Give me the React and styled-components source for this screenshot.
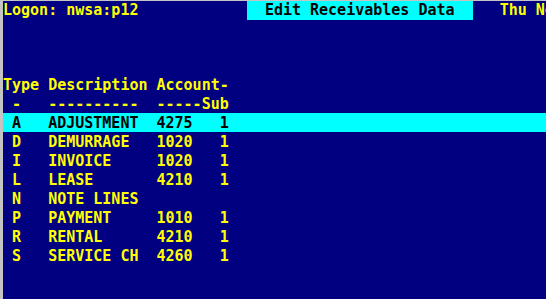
import React from 'react'
import styled, { createGlobalStyle } from 'styled-components';

const Global = createGlobalStyle`
    html, body{
        margin:0;
        padding:0;
        background:#000080;
        overflow:hidden;
    }
`;

// Styles
const Screen = styled.div`
    width:546px;
    height:299px;
    box-sizing:border-box;
    border-top:1px solid #c4c4c4;
    border-left:3px solid #c4c4c4;
    background:#000080;
    overflow:hidden;
    font-family:"DejaVu Sans Mono", "Liberation Mono", monospace;
    font-weight:bold;
    font-size:15px;
    line-height:19px;
    color:#ffff00;
    white-space:pre;
`;

const TopBar = styled.div`
    display:flex;
    height:19px;
`;

const Field = styled.span`
    display:block;
    width:${p => p.cols}ch;
    flex:none;
`;

const TitleBox = styled.span`
    display:block;
    width:25ch;
    flex:none;
    padding-left:2ch;
    box-sizing:border-box;
    background:#00ffff;
    color:#000000;
`;

const Table = styled.div`
    margin-top:55px;
`;

const Row = styled.div`
    display:grid;
    grid-template-columns:5ch 12ch 7ch 1fr;
    height:19px;
    box-sizing:border-box;
    padding-top:2px;
    line-height:17px;
    background:${p => p.selected ? '#00ffff' : 'transparent'};
    color:${p => p.selected ? '#000000' : '#ffff00'};
`;

const Cell = styled.span`
    padding-left:${p => p.indent || 0}ch;
`;

const codes = [
    { type:'A', desc:'ADJUSTMENT', account:'4275', sub:'1' },
    { type:'D', desc:'DEMURRAGE', account:'1020', sub:'1' },
    { type:'I', desc:'INVOICE', account:'1020', sub:'1' },
    { type:'L', desc:'LEASE', account:'4210', sub:'1' },
    { type:'N', desc:'NOTE LINES', account:'', sub:'' },
    { type:'P', desc:'PAYMENT', account:'1010', sub:'1' },
    { type:'R', desc:'RENTAL', account:'4210', sub:'1' },
    { type:'S', desc:'SERVICE CH', account:'4260', sub:'1' },
];

const App = () => {
    return (
        <>
            <Global />
            <Screen>
                <TopBar>
                    <Field cols={27}>Logon: nwsa:p12</Field>
                    <TitleBox>Edit Receivables Data</TitleBox>
                    <Field cols={3}></Field>
                    <Field cols={20}>Thu Nov 12 2009</Field>
                </TopBar>
                <Table>
                    <Row>
                        <Cell>Type</Cell>
                        <Cell>Description</Cell>
                        <Cell>Account-</Cell>
                        <Cell></Cell>
                    </Row>
                    <Row>
                        <Cell indent={1}>-</Cell>
                        <Cell>----------</Cell>
                        <Cell>-----Sub</Cell>
                        <Cell></Cell>
                    </Row>
                    {codes.map((c, i) => (
                        <Row key={c.type} selected={i === 0}>
                            <Cell indent={1}>{c.type}</Cell>
                            <Cell>{c.desc}</Cell>
                            <Cell>{c.account}</Cell>
                            <Cell>{c.sub}</Cell>
                        </Row>
                    ))}
                </Table>
            </Screen>
        </>
    )
}

export default App
